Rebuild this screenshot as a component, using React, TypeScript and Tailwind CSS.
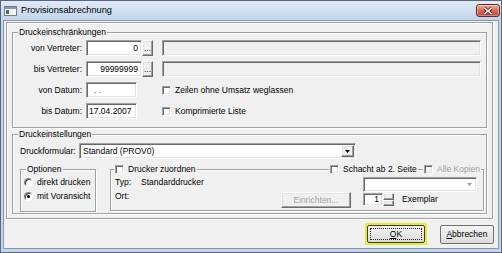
import React from "react";

const sunken =
  "border border-t-[#a0a0a0] border-l-[#a0a0a0] border-r-white border-b-white shadow-[inset_1px_1px_0_#696969,inset_-1px_-1px_0_#e3e3e3]";
const raised =
  "bg-[#f0f0f0] border border-t-white border-l-white border-r-[#696969] border-b-[#696969] shadow-[inset_-1px_-1px_0_#a0a0a0,inset_1px_1px_0_#e3e3e3]";

function Group({
  label,
  className,
  labelPos,
  children,
}: {
  label?: string;
  className: string;
  labelPos?: string;
  children?: React.ReactNode;
}) {
  return (
    <div
      className={`relative border border-[#a0a0a0] shadow-[inset_1px_1px_0_#fff,1px_1px_0_#fff] ${className}`}
    >
      {label && (
        <span
          className={`absolute top-[-6px] bg-[#f0f0f0] px-[1px] leading-[11px] ${labelPos ?? "left-[5px]"}`}
        >
          {label}
        </span>
      )}
      {children}
    </div>
  );
}

function Check({ disabled }: { disabled?: boolean }) {
  return (
    <span
      className={`block w-[9px] h-[9px] shrink-0 ${disabled ? "bg-[#f0f0f0]" : "bg-white"} ${sunken}`}
    />
  );
}

function Radio({ on }: { on?: boolean }) {
  return (
    <span className="relative block w-[9px] h-[9px] shrink-0 rounded-full bg-white border border-t-[#808080] border-l-[#808080] border-r-white border-b-white shadow-[inset_1px_1px_0_#404040]">
      {on && (
        <span className="absolute left-[2px] top-[2px] w-[3px] h-[3px] rounded-full bg-black" />
      )}
    </span>
  );
}

function Arrow({ color = "#000" }: { color?: string }) {
  return (
    <svg width="5" height="3" viewBox="0 0 5 3">
      <path d="M0 0H5L2.5 3Z" fill={color} />
    </svg>
  );
}

function Row({ label, children }: { label: string; children: React.ReactNode }) {
  return (
    <div className="flex items-center h-[16px]">
      <span className="w-[69px] text-right">{label}</span>
      <div className="ml-[4px] flex items-center">{children}</div>
    </div>
  );
}

export default function App() {
  return (
    <div className="w-[502px] h-[253px] overflow-hidden bg-[#c3d6ec] border border-[#56687e] flex flex-col font-['Liberation_Sans',Arial,sans-serif] text-[8.5px] text-black">
      {/* title bar */}
      <div className="h-[19px] shrink-0 flex items-center bg-gradient-to-b from-[#e2ebf6] to-[#bfd4eb]">
        <svg className="ml-[3px]" width="13" height="10" viewBox="0 0 13 10">
          <rect x="0.5" y="0.5" width="12" height="9" fill="#f4f6f8" stroke="#6f7c8a" />
          <rect x="1" y="1" width="11" height="2" fill="#7d98b8" />
          <rect x="2" y="4" width="3" height="4" fill="#4d6a52" />
        </svg>
        <span className="ml-[4px] text-[9.2px] text-black">Provisionsabrechnung</span>
        <div className="ml-auto mr-[1px] w-[24px] h-[13px] rounded-[3px] border border-[#6d2a20] bg-gradient-to-b from-[#eab0a3] via-[#d46e5a] to-[#c1452f] flex items-center justify-center shadow-[inset_0_0_0_1px_rgba(255,255,255,0.35)]">
          <svg width="10" height="8" viewBox="0 0 10 8">
            <path d="M1.5 1L8.5 7M8.5 1L1.5 7" stroke="#5a1c12" strokeWidth="3" />
            <path d="M1.5 1L8.5 7M8.5 1L1.5 7" stroke="#fff" strokeWidth="1.6" />
          </svg>
        </div>
      </div>

      {/* client */}
      <div className="flex-1 mx-[2px] mb-[3px] border border-[#8797ac] bg-[#f0f0f0] flex flex-col">
        <div className="ml-[2px] mt-[1px] w-[487px] h-[197px] border border-[#a0a0a0] shadow-[inset_1px_1px_0_#fff,1px_1px_0_#fff] flex flex-col">
          {/* Druckeinschränkungen */}
          <Group
            label="Druckeinschränkungen"
            className="ml-[5px] mt-[9px] w-[475px] h-[96px] shrink-0 pt-[7px] flex flex-col gap-[5px]"
          >
            <Row label="von Vertreter:">
              <div className={`w-[56px] h-[16px] bg-white ${sunken} flex items-center justify-end pr-[3px]`}>0</div>
              <div className={`w-[11px] h-[16px] ${raised} flex items-end justify-center pb-[3px] leading-none`}>...</div>
              <div className={`ml-[9px] w-[319px] h-[16px] bg-[#f0f0f0] ${sunken}`} />
            </Row>
            <Row label="bis Vertreter:">
              <div className={`w-[56px] h-[16px] bg-white ${sunken} flex items-center justify-end pr-[3px]`}>99999999</div>
              <div className={`w-[11px] h-[16px] ${raised} flex items-end justify-center pb-[3px] leading-none`}>...</div>
              <div className={`ml-[9px] w-[319px] h-[16px] bg-[#f0f0f0] ${sunken}`} />
            </Row>
            <Row label="von Datum:">
              <div className={`w-[51px] h-[16px] bg-white ${sunken} flex items-center pl-[7px] text-[#555]`}>. .</div>
              <div className="ml-[25px] flex items-center gap-[4px]">
                <Check />
                <span>Zeilen ohne Umsatz weglassen</span>
              </div>
            </Row>
            <Row label="bis Datum:">
              <div className={`w-[51px] h-[16px] bg-white ${sunken} flex items-center pl-[2px]`}>17.04.2007</div>
              <div className="ml-[25px] flex items-center gap-[4px]">
                <Check />
                <span>Komprimierte Liste</span>
              </div>
            </Row>
          </Group>

          {/* Druckeinstellungen */}
          <Group
            label="Druckeinstellungen"
            className="ml-[5px] mt-[6px] w-[475px] h-[80px] shrink-0 pl-[7px] pt-[8px] flex flex-col"
          >
            <div className="flex items-center h-[16px]">
              <span className="w-[59px]">Druckformular:</span>
              <div className={`w-[277px] h-[16px] bg-white ${sunken} flex items-center pl-[3px]`}>
                <span className="flex-1">Standard (PROV0)</span>
                <div className={`w-[13px] h-[12px] mr-[1px] ${raised} flex items-center justify-center`}>
                  <Arrow />
                </div>
              </div>
            </div>

            <div className="mt-[10px] flex items-start">
              <Group label="Optionen" className="w-[76px] h-[43px] shrink-0 pl-[3px] pt-[6px] flex flex-col gap-[2px]">
                <div className="flex items-center h-[12px] gap-[4px]">
                  <Radio />
                  <span>direkt drucken</span>
                </div>
                <div className="flex items-center h-[12px] gap-[4px]">
                  <Radio on />
                  <span>mit Voransicht</span>
                </div>
              </Group>

              <Group className="ml-[14px] w-[374px] h-[42px] shrink-0 pt-[7px] flex items-start">
                <span className="absolute left-[3px] top-[-6px] h-[11px] bg-[#f0f0f0] px-[1px] flex items-center gap-[4px]">
                  <Check />
                  <span>Drucker zuordnen</span>
                </span>
                <span className="absolute left-[218px] top-[-6px] h-[11px] bg-[#f0f0f0] px-[1px] flex items-center gap-[4px]">
                  <Check />
                  <span>Schacht ab 2. Seite</span>
                </span>
                <span className="absolute left-[312px] top-[-6px] h-[11px] bg-[#f0f0f0] px-[1px] flex items-center gap-[4px] text-[#a0a0a0]">
                  <Check disabled />
                  <span>Alle Kopien</span>
                </span>

                <div className="w-[170px] pl-[4px] flex flex-col gap-[3px]">
                  <div className="h-[11px] flex items-center">
                    <span className="w-[26px]">Typ:</span>
                    <span>Standarddrucker</span>
                  </div>
                  <div className="h-[11px] flex items-center">
                    <span>Ort:</span>
                  </div>
                </div>
                <div className={`mt-[15px] w-[70px] h-[16px] ${raised} flex items-center justify-center text-[#a0a0a0]`}>
                  Einrichten...
                </div>
                <div className="ml-[12px] flex flex-col">
                  <div className={`w-[114px] h-[15px] bg-white ${sunken} flex items-center justify-end pr-[4px]`}>
                    <Arrow color="#a0a0a0" />
                  </div>
                  <div className="mt-[1px] flex items-center">
                    <div className={`w-[20px] h-[13px] bg-white ${sunken} flex items-center justify-end pr-[3px]`}>1</div>
                    <div className="w-[11px] h-[13px] flex flex-col">
                      <div className={`flex-1 ${raised}`} />
                      <div className={`flex-1 ${raised}`} />
                    </div>
                    <span className="ml-[8px]">Exemplar</span>
                  </div>
                </div>
              </Group>
            </div>
          </Group>
        </div>

        {/* buttons */}
        <div className="mt-[4px] flex items-center justify-end pr-[4px]">
          <div className="w-[62px] h-[22px] border-2 border-[#eaea2a] rounded-[1px] p-0">
            <div className="w-full h-full rounded-[2px] border border-[#3c3c3c] bg-gradient-to-b from-[#f4f4f4] to-[#dcdcdc] p-[2px]">
              <div className="w-full h-full border border-dotted border-[#222] flex items-center justify-center">
                <span>
                  <span className="underline">O</span>K
                </span>
              </div>
            </div>
          </div>
          <div className="ml-[13px] w-[54px] h-[19px] rounded-[2px] border border-[#707070] bg-gradient-to-b from-[#f4f4f4] to-[#dcdcdc] flex items-center justify-center">
            <span>
              <span className="underline">A</span>bbrechen
            </span>
          </div>
        </div>
      </div>
    </div>
  );
}
